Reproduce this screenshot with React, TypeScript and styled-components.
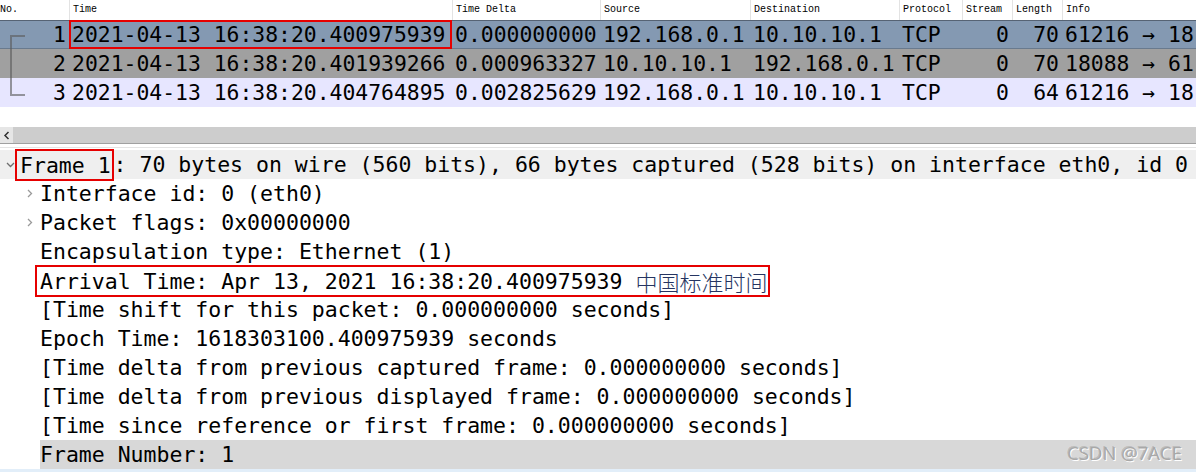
import styled, { createGlobalStyle } from "styled-components";

const GlobalStyle = createGlobalStyle`
  html, body {
    margin: 0;
    padding: 0;
    background: #ffffff;
  }
  body {
    width: 1196px;
    height: 472px;
    overflow: hidden;
  }
`;

const mono = `"DejaVu Sans Mono", "Liberation Mono", monospace`;

interface Column {
  title: string;
  width: string;
  align: "left" | "right";
}

const columns: Column[] = [
  { title: "No.", width: "69px", align: "right" },
  { title: "Time", width: "383px", align: "left" },
  { title: "Time Delta", width: "148px", align: "left" },
  { title: "Source", width: "150px", align: "left" },
  { title: "Destination", width: "149px", align: "left" },
  { title: "Protocol", width: "63px", align: "left" },
  { title: "Stream", width: "50px", align: "right" },
  { title: "Length", width: "50px", align: "right" },
  { title: "Info", width: "1fr", align: "left" },
];

const gridCols = columns.map((c) => c.width).join(" ");

const packets = [
  {
    bg: "#8499b2",
    selected: true,
    cells: ["1", "2021-04-13 16:38:20.400975939", "0.000000000", "192.168.0.1", "10.10.10.1", "TCP", "0", "70", "61216 → 18"],
  },
  {
    bg: "#a0a0a0",
    selected: false,
    cells: ["2", "2021-04-13 16:38:20.401939266", "0.000963327", "10.10.10.1", "192.168.0.1", "TCP", "0", "70", "18088 → 61"],
  },
  {
    bg: "#e7e6ff",
    selected: false,
    cells: ["3", "2021-04-13 16:38:20.404764895", "0.002825629", "192.168.0.1", "10.10.10.1", "TCP", "0", "64", "61216 → 18"],
  },
];

const Page = styled.div`
  position: relative;
  width: 1196px;
  height: 472px;
  overflow: hidden;
  background: #ffffff;
`;

const PacketList = styled.div`
  position: relative;
  height: 127px;
`;

const HeaderRow = styled.div`
  display: grid;
  grid-template-columns: ${gridCols};
  height: 20px;
  background: #ffffff;
`;

const HeaderCell = styled.div<{ $first: boolean }>`
  font-family: "Liberation Mono", monospace;
  font-size: 10px;
  line-height: 20px;
  color: #000;
  padding-left: ${(p) => (p.$first ? "0" : "3px")};
  border-left: ${(p) => (p.$first ? "none" : "1px solid #e3e3e3")};
  white-space: nowrap;
  overflow: hidden;
`;

const PacketRow = styled.div<{ $bg: string; $selected: boolean }>`
  display: grid;
  grid-template-columns: ${gridCols};
  height: 29px;
  background: ${(p) => p.$bg};
  box-shadow: ${(p) =>
    p.$selected ? "inset 0 1px 0 rgba(0,0,0,0.35), inset 0 -1px 0 rgba(0,0,0,0.2)" : "none"};
`;

const Cell = styled.div<{ $align: "left" | "right"; $marked?: boolean }>`
  font-family: ${mono};
  font-size: 21.4px;
  line-height: 29px;
  color: #000;
  text-align: ${(p) => p.$align};
  padding: ${(p) => (p.$align === "right" ? "0 3px 0 0" : "0 0 0 3px")};
  white-space: nowrap;
  overflow: hidden;
  outline: ${(p) => (p.$marked ? "2px solid #e60000" : "none")};
  outline-offset: -2px;
`;

const Bracket = styled.div`
  position: absolute;
  left: 10px;
  top: 35px;
  width: 13px;
  height: 57px;
  border: 2px solid rgba(90, 90, 90, 0.6);
  border-right: none;
`;

const ScrollBar = styled.div`
  display: flex;
  height: 16px;
  background: #cdcdcd;
`;

const ScrollArrow = styled.div`
  width: 13px;
  background: #e6e6e6;
  display: flex;
  align-items: center;
  justify-content: center;
`;

const Splitter = styled.div`
  height: 3px;
  border-top: 1px solid #a0a0a0;
  border-bottom: 1px solid #e4e4e4;
`;

const Details = styled.div`
  display: flex;
  flex-direction: column;
`;

const TreeRow = styled.div<{ $level: number; $bg?: string; $top?: number }>`
  display: flex;
  align-items: center;
  height: 29px;
  margin-top: ${(p) => p.$top ?? 0}px;
  padding-left: ${(p) => (p.$level === 0 ? 0 : 20)}px;
  background: ${(p) => (p.$level === 0 ? p.$bg ?? "transparent" : "transparent")};
  white-space: nowrap;
`;

const Twisty = styled.div`
  width: 20px;
  height: 29px;
  flex: none;
  display: flex;
  align-items: center;
  justify-content: center;
`;

const Label = styled.div<{ $bg?: string }>`
  flex: 1;
  height: 29px;
  display: flex;
  align-items: center;
  font-family: ${mono};
  font-size: 21.5px;
  color: #000;
  background: ${(p) => p.$bg ?? "transparent"};
`;

const Boxed = styled.span`
  border: 2px solid #e60000;
  padding: 2px 1px 1px 3px;
  margin-left: -5px;
  height: 25px;
  display: inline-flex;
  align-items: center;
`;

const Cjk = styled.span`
  font-family: "Noto Sans CJK SC", sans-serif;
  font-size: 22px;
  color: #253461;
  font-weight: 300;
`;

const BottomStrip = styled.div`
  height: 3px;
  background: #e2eef9;
`;

const Watermark = styled.div`
  position: absolute;
  right: 14px;
  bottom: 7px;
  font-family: "Open Sans", "Noto Sans", sans-serif;
  font-size: 18.5px;
  color: #a8a8a8;
  text-shadow: 1px 1px 0 #ffffff, -1px -1px 0 rgba(0, 0, 0, 0.15);
`;

const ChevronDown = () => (
  <svg width="9" height="6" viewBox="0 0 9 6">
    <path d="M1 1 L4.5 4.5 L8 1" fill="none" stroke="#6e6e6e" strokeWidth="1.3" />
  </svg>
);

const ChevronRight = () => (
  <svg width="6" height="9" viewBox="0 0 6 9">
    <path d="M1 1 L4.5 4.5 L1 8" fill="none" stroke="#9a9a9a" strokeWidth="1.3" />
  </svg>
);

const ChevronLeft = () => (
  <svg width="7" height="9" viewBox="0 0 7 9">
    <path d="M5.5 1 L2 4.5 L5.5 8" fill="none" stroke="#303030" strokeWidth="1.5" />
  </svg>
);

const children: { text: React.ReactNode; expandable?: boolean; bg?: string }[] = [
  { text: "Interface id: 0 (eth0)", expandable: true },
  { text: "Packet flags: 0x00000000", expandable: true },
  { text: "Encapsulation type: Ethernet (1)" },
  {
    text: (
      <Boxed>
        Arrival Time: Apr 13, 2021 16:38:20.400975939&nbsp;<Cjk>中国标准时间</Cjk>
      </Boxed>
    ),
  },
  { text: "[Time shift for this packet: 0.000000000 seconds]" },
  { text: "Epoch Time: 1618303100.400975939 seconds" },
  { text: "[Time delta from previous captured frame: 0.000000000 seconds]" },
  { text: "[Time delta from previous displayed frame: 0.000000000 seconds]" },
  { text: "[Time since reference or first frame: 0.000000000 seconds]" },
  { text: "Frame Number: 1", bg: "#d8d8d8" },
];

export default function App() {
  return (
    <Page>
      <GlobalStyle />
      <PacketList>
        <HeaderRow>
          {columns.map((c, i) => (
            <HeaderCell key={c.title} $first={i === 0}>
              {c.title}
            </HeaderCell>
          ))}
        </HeaderRow>
        {packets.map((p) => (
          <PacketRow key={p.cells[0]} $bg={p.bg} $selected={p.selected}>
            {p.cells.map((v, i) => (
              <Cell key={i} $align={columns[i].align} $marked={p.selected && i === 1}>
                {v}
              </Cell>
            ))}
          </PacketRow>
        ))}
        <Bracket />
      </PacketList>
      <ScrollBar>
        <ScrollArrow>
          <ChevronLeft />
        </ScrollArrow>
      </ScrollBar>
      <Splitter />
      <Details>
        <TreeRow $level={0} $bg="#efefef" $top={2}>
          <Twisty>
            <ChevronDown />
          </Twisty>
          <Label>
            <Boxed>Frame 1</Boxed>: 70 bytes on wire (560 bits), 66 bytes captured (528 bits) on interface eth0, id 0
          </Label>
        </TreeRow>
        {children.map((c, i) => (
          <TreeRow key={i} $level={1}>
            <Twisty>{c.expandable ? <ChevronRight /> : null}</Twisty>
            <Label $bg={c.bg}>{c.text}</Label>
          </TreeRow>
        ))}
        <BottomStrip />
      </Details>
      <Watermark>CSDN @7ACE</Watermark>
    </Page>
  );
}
